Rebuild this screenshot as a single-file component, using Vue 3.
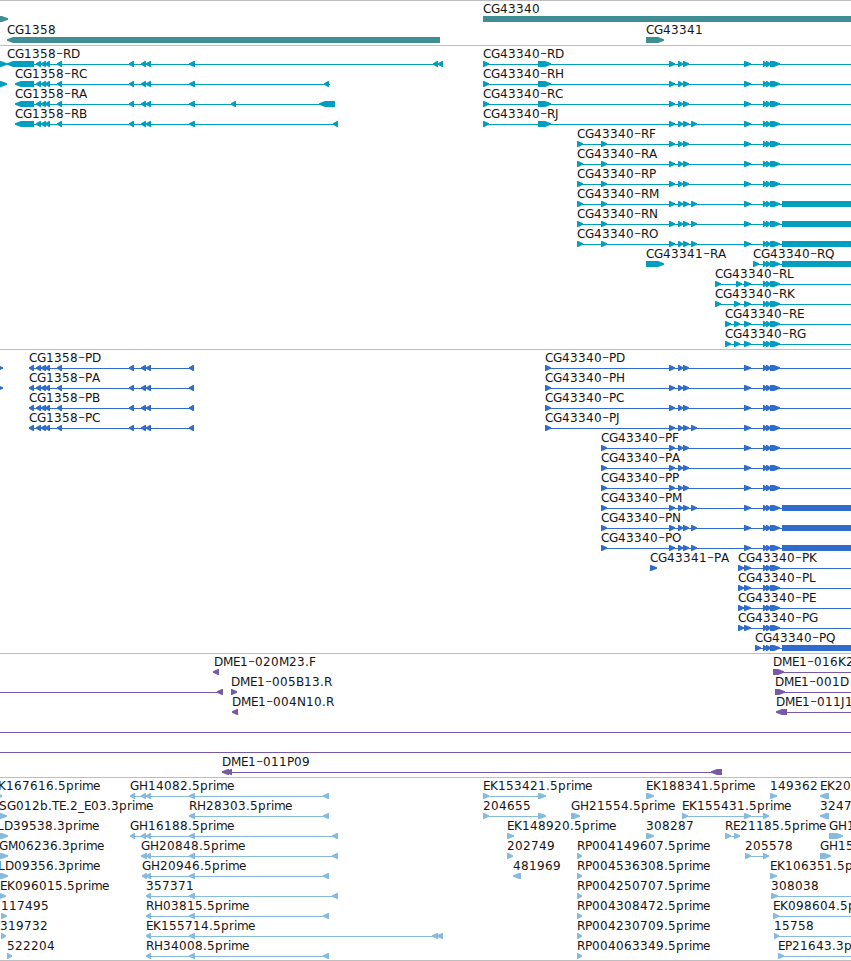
<template>
  <main class="browser">
    <section v-for="track in tracks" :key="track.name" class="track" :class="track.name">
      <svg class="canvas" width="851" :height="track.height" :viewBox="`0 0 851 ${track.height}`">
        <g
          v-for="(f, i) in track.features"
          :key="i"
          :transform="`translate(0 ${f.row * track.pitch})`"
        >
          <rect v-if="f.to > f.from" class="intron" :x="f.from" y="18" :width="f.to - f.from" height="1" />
          <polygon v-for="(b, n) in f.blocks" :key="n" class="exon" :points="shape(b, f.strand)" />
          <text v-if="f.label" class="label"><tspan
            v-for="(part, n) in labelParts(f.label, f.x)"
            :key="n"
            :class="{ dash: part.text === '-' }"
            :x="part.xs"
            :y="part.text === '-' ? 13 : 12"
          >{{ part.text }}</tspan></text>
        </g>
      </svg>
    </section>
  </main>
</template>

<script setup>
const EDGE = 870;

// letter advances in whole pixels
const advances = {
  C: 8, G: 9, D: 9, M: 10, E: 7, K: 8, R: 8, H: 9, L: 7, P: 7, S: 8, T: 7,
  A: 8, B: 8, J: 4, F: 7, N: 9, O: 9, Q: 9,
  "-": 7, ".": 4, _: 6, p: 8, r: 5, i: 3, m: 11, e: 7, b: 8,
};

// the dash is drawn wider than the font has it, so it is a part of its own
function labelParts(label, start) {
  let x = start;
  return label.split(/(-)/).map((text) => {
    const xs = [...text].map((ch) => {
      const here = x;
      x += advances[ch] || 8;
      return here;
    });
    return { text, xs: xs.join(" ") };
  });
}

// a block with its arrow tip on the strand side
function shape([a, b], strand) {
  const tip = Math.min(6, b - a - 1);
  if (strand === "+") {
    return `${a},15 ${b - tip},15 ${b},17.2 ${b},18.8 ${b - tip},21 ${a},21`;
  }
  return `${b},15 ${a + tip},15 ${a},17.2 ${a},18.8 ${a + tip},21 ${b},21`;
}

function feature(row, label, x, strand, blocks, to, from) {
  const starts = blocks.map((b) => b[0]);
  const ends = blocks.map((b) => b[1]);
  return {
    row, label, x, strand, blocks,
    from: from ?? Math.min(...starts) + 1,
    to: to ?? Math.max(...ends) - 1,
  };
}

// exons shared by the isoforms
const leftExons = [[36, 41], [41, 46], [45, 50], [57, 62], [129, 134], [141, 146], [146, 151]];
const mid = [[669, 675], [678, 683], [683, 689]];
const extra = [[691, 697]];
const tail = [[763, 767], [766, 771], [770, 780]];
const late = [[744, 751], ...tail];
const long = [[782, EDGE]];

const genes = [
  feature(0, "", 0, "+", [[-6, 8]]),
  feature(0, "CG43340", 483, "+", [[483, EDGE]]),
  feature(1, "CG1358", 7, "-", [[7, 440]]),
  feature(1, "CG43341", 646, "+", [[646, 664]]),
];

const transcripts = [
  feature(0, "", 0, "+", [[-6, 7]]),
  feature(1, "", 0, "+", [[-6, 7]]),
  feature(0, "CG1358-RD", 7, "-", [[7, 34], ...leftExons, [189, 195], [433, 438], [438, 443]]),
  feature(1, "CG1358-RC", 15, "-", [[15, 34], ...leftExons, [189, 195], [324, 329]], 330),
  feature(2, "CG1358-RA", 15, "-", [[15, 34], ...leftExons, [189, 195], [231, 236], [319, 335]]),
  feature(3, "CG1358-RB", 15, "-", [[15, 34], ...leftExons, [189, 195], [333, 338]]),
  ...["RD", "RH", "RC", "RJ"].map((id, i) =>
    feature(i, `CG43340-${id}`, 483, "+",
      [[483, 489], [538, 551], ...mid, ...(id === "RJ" ? extra : []), ...late], EDGE)),
  ...["RF", "RA", "RP"].map((id, i) =>
    feature(i + 4, `CG43340-${id}`, 577, "+", [[577, 583], [601, 607], ...mid, ...late], EDGE)),
  ...["RM", "RN", "RO"].map((id, i) =>
    feature(i + 7, `CG43340-${id}`, 577, "+",
      [[577, 583], [601, 607], ...mid, ...extra, ...late, ...long])),
  feature(10, "CG43341-RA", 646, "+", [[646, 664]]),
  feature(10, "CG43340-RQ", 753, "+", [[753, 759], ...tail, ...long]),
  feature(11, "CG43340-RL", 715, "+", [[715, 721], [736, 742], ...late], EDGE),
  feature(12, "CG43340-RK", 715, "+", [[715, 721], [734, 740], ...late], EDGE),
  feature(13, "CG43340-RE", 725, "+", [[725, 731], [734, 740], ...late], EDGE),
  feature(14, "CG43340-RG", 725, "+", [[725, 731], [734, 740], ...late], EDGE),
];

const proteins = [
  feature(0, "", 0, "+", [[-3, 3]]),
  feature(1, "", 0, "+", [[-3, 3]]),
  ...["PD", "PA", "PB", "PC"].map((id, i) =>
    feature(i, `CG1358-${id}`, 29, "-", [[29, 34], ...leftExons, [189, 194]])),
  ...["PD", "PH", "PC", "PJ"].map((id, i) =>
    feature(i, `CG43340-${id}`, 545, "+",
      [[545, 551], ...mid, ...(id === "PJ" ? extra : []), ...late], EDGE)),
  ...["PF", "PA", "PP"].map((id, i) =>
    feature(i + 4, `CG43340-${id}`, 601, "+", [[601, 607], ...mid, ...late], EDGE)),
  ...["PM", "PN", "PO"].map((id, i) =>
    feature(i + 7, `CG43340-${id}`, 601, "+", [[601, 607], ...mid, ...extra, ...late, ...long])),
  feature(10, "CG43341-PA", 650, "+", [[650, 657]]),
  ...["PK", "PL", "PE", "PG"].map((id, i) =>
    feature(i + 10, `CG43340-${id}`, 738, "+", [[738, 744], ...late], EDGE)),
  feature(14, "CG43340-PQ", 755, "+", [[755, 761], ...tail, ...long]),
];

const clones = [
  feature(0, "DME1-020M23.F", 214, "-", [[213, 219]]),
  feature(0, "DME1-016K2", 773, "+", [[773, 784]], EDGE),
  feature(1, "", 0, "-", [[217, 223]], 222, 0),
  feature(1, "DME1-005B13.R", 231, "+", [[231, 237]]),
  feature(1, "DME1-001D", 775, "+", [[775, 785]], EDGE),
  feature(2, "DME1-004N10.R", 232, "-", [[232, 238]]),
  feature(2, "DME1-011J1", 776, "-", [[776, 787]], EDGE),
  feature(3, "", 0, "+", [], EDGE, 0),
  feature(4, "", 0, "+", [], EDGE, 0),
  feature(5, "DME1-011P09", 222, "-", [[222, 229], [226, 232], [711, 722]]),
];

const ests = [
  feature(0, "K167616.5prime", -2, "+", [[-4, 2]]),
  feature(0, "GH14082.5prime", 130, "-", [[130, 135], [141, 146], [146, 151], [189, 195], [323, 329]]),
  feature(0, "EK153421.5prime", 483, "+", [[483, 489], [538, 546]]),
  feature(0, "EK188341.5prime", 646, "+", [[646, 654]]),
  feature(0, "149362", 770, "+", [[770, 777]]),
  feature(0, "EK20", 820, "-", [[820, 829]]),
  feature(1, "SG012b.TE.2_E03.3prime", -1, "+", [[-5, 7]]),
  feature(1, "RH28303.5prime", 189, "-", [[189, 195], [323, 329]]),
  feature(1, "204655", 483, "+", [[483, 489], [538, 546]]),
  feature(1, "GH21554.5prime", 571, "+", [[571, 580]]),
  feature(1, "EK155431.5prime", 682, "+", [[682, 688], [744, 751], [763, 769]]),
  feature(1, "3247", 820, "-", [[820, 829]]),
  feature(2, "LD39538.3prime", -3, "+", [[-5, 8]]),
  feature(2, "GH16188.5prime", 130, "-", [[130, 135], [141, 146], [146, 151], [189, 195], [332, 338]]),
  feature(2, "EK148920.5prime", 507, "+", [[507, 514]]),
  feature(2, "308287", 646, "+", [[646, 654]]),
  feature(2, "RE21185.5prime", 725, "+", [[725, 731], [734, 740]]),
  feature(2, "GH1", 829, "+", [[829, 843]]),
  feature(3, "GM06236.3prime", -1, "+", [[-5, 8]]),
  feature(3, "GH20848.5prime", 141, "-", [[141, 147], [146, 151], [189, 195], [332, 338]]),
  feature(3, "202749", 507, "+", [[507, 513]]),
  feature(3, "RP004149607.5prime", 577, "+", [[577, 582]]),
  feature(3, "205578", 745, "+", [[745, 751], [763, 769]]),
  feature(3, "GH15", 820, "+", [[820, 831]]),
  feature(4, "LD09356.3prime", -2, "+", [[-5, 8]]),
  feature(4, "GH20946.5prime", 142, "-", [[142, 147], [146, 151], [189, 195], [323, 329]]),
  feature(4, "481969", 513, "-", [[513, 521]]),
  feature(4, "RP004536308.5prime", 577, "+", [[577, 582]]),
  feature(4, "EK106351.5p", 770, "+", [[770, 777]]),
  feature(5, "EK096015.5prime", 0, "+", [[-3, 6]]),
  feature(5, "357371", 146, "-", [[146, 151], [189, 195], [332, 338]]),
  feature(5, "RP004250707.5prime", 577, "+", [[577, 582]]),
  feature(5, "308038", 771, "+", [[771, 778]], EDGE),
  feature(6, "117495", 1, "+", [[1, 7]]),
  feature(6, "RH03815.5prime", 146, "-", [[146, 151], [189, 195], [323, 329]]),
  feature(6, "RP004308472.5prime", 577, "+", [[577, 582]]),
  feature(6, "EK098604.5p", 773, "+", [[773, 779]], EDGE),
  feature(7, "319732", 0, "+", [[1, 6]]),
  feature(7, "EK155714.5prime", 146, "-", [[146, 151], [189, 195], [432, 438], [437, 443]]),
  feature(7, "RP004230709.5prime", 577, "+", [[577, 582]]),
  feature(7, "15758", 774, "+", [[774, 779]], EDGE),
  feature(8, "522204", 7, "+", [[7, 12]]),
  feature(8, "RH34008.5prime", 146, "-", [[146, 151], [189, 195], [323, 329]]),
  feature(8, "RP004063349.5prime", 577, "+", [[577, 582]]),
  feature(8, "EP21643.3p", 778, "+", [[778, 784]], EDGE),
];

const tracks = [
  { name: "genes", height: 44, pitch: 21, features: genes },
  { name: "transcripts", height: 303, pitch: 20, features: transcripts },
  { name: "proteins", height: 303, pitch: 20, features: proteins },
  { name: "clones", height: 123, pitch: 20, features: clones },
  { name: "ests", height: 182, pitch: 20, features: ests },
];
</script>

<style>
body {
  margin: 0;
  background: #ffffff;
}
</style>

<style scoped>
.browser {
  display: flex;
  flex-direction: column;
  width: 851px;
  overflow: hidden;
  border-bottom: 1px solid #bebebe;
}

.track {
  border-top: 1px solid #bebebe;
}

.canvas {
  display: block;
}

.exon,
.intron {
  fill: currentColor;
}

.label {
  font-family: "DejaVu Sans", sans-serif;
  font-size: 12px;
  fill: #141414;
}

.dash {
  font-size: 20px;
  font-weight: 200;
}

/* === Track colours === */
.genes {
  color: #3e8e94;
}

.transcripts {
  color: #009ebf;
}

.proteins {
  color: #306ccc;
}

.clones {
  color: #7759a7;
}

.ests {
  color: #87bbdd;
}
</style>
